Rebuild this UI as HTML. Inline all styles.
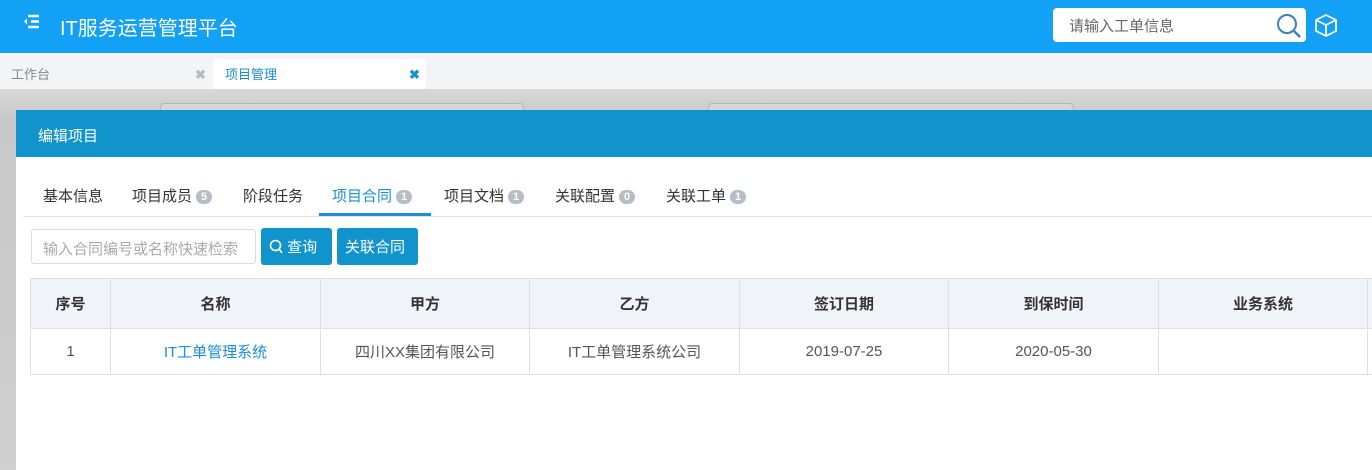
<!DOCTYPE html>
<html><head><meta charset="utf-8"><style>
*{margin:0;padding:0;box-sizing:border-box}
body{width:1372px;height:461px;overflow:hidden;position:relative;font-family:"Liberation Sans","Noto Sans CJK SC",sans-serif;background:#d0d0d0}
.top{position:absolute;left:0;top:0;width:1372px;height:53px;background:#12a1f5}
.title{position:absolute;left:60px;top:12px;color:#fff;font-size:20px}
.search{position:absolute;left:1053px;top:8px;width:253px;height:34px;background:#fff;border-radius:4px}
.search span{position:absolute;left:16px;top:7px;font-size:15px;color:#666}
.tabs{position:absolute;left:0;top:53px;width:1372px;height:36px;background:#f3f4f7}
.tab{position:absolute;top:0;height:36px;font-size:13px;line-height:44px}
.overlay{position:absolute;left:0;top:89px;width:1372px;height:372px;background:linear-gradient(#d8d8d8,#c8c8c8 30px,#cfcfcf)}
.ghost{position:absolute;top:103px;height:20px;border:1px solid #b5b5b5;border-radius:4px;background:#d6d6d6}
.modal{position:absolute;left:16px;top:110px;width:1500px;height:360px;background:#fff}
.mh{height:47px;background:#1193cb;color:#fff;font-size:15px;padding:15px 0 0 22px}
.ntab{position:absolute;top:75px;font-size:15px;color:#333}
.badge{display:inline-block;width:16px;height:14px;border-radius:7px;background:#b5bec6;color:#fff;font-size:11px;text-align:center;line-height:14px;vertical-align:1px;margin-left:4px;font-weight:bold}
table{position:absolute;left:14px;top:168px;border-collapse:collapse;font-size:15px;table-layout:fixed;width:1397px}
td,th{border:1px solid #dde0e4;text-align:center;color:#555;font-weight:normal}
th{height:50px;background:#f0f3f8;color:#333;font-weight:bold}
td{height:46px}
</style></head><body>
<div class="top">
 <svg style="position:absolute;left:22px;top:14px" width="18" height="16"><path d="M6 2h11M9 7.5h8M6 13h11" stroke="#fff" stroke-width="2.5"/><path d="M5 4.5L2 7.5 5 10.5z" fill="#fff"/></svg>
 <div class="title">IT服务运营管理平台</div>
 <div class="search"><span>请输入工单信息</span>
  <svg style="position:absolute;left:222px;top:4px" width="28" height="28"><circle cx="12" cy="12" r="9" fill="none" stroke="#3d7fbf" stroke-width="2"/><path d="M19 19l6 6" stroke="#3d7fbf" stroke-width="2.5"/></svg></div>
 <svg style="position:absolute;left:1314px;top:13px" width="24" height="24"><path d="M12 2l10 5v11l-10 5-10-5V7z M2 7l10 5 10-5 M12 12v11" fill="none" stroke="#fff" stroke-width="1.8" stroke-linejoin="round"/></svg>
</div>
<div class="tabs">
 <div class="tab" style="left:0;width:213px;padding-left:11px;color:#888">工作台<span style="position:absolute;left:195px;color:#bbb;font-weight:bold">✖</span></div>
 <div class="tab" style="left:213px;top:6px;height:30px;line-height:32px;width:213px;background:#fff;border-radius:5px 5px 0 0;padding-left:12px;color:#1a8fd6">项目管理<span style="position:absolute;left:196px;color:#1a8fd6;font-weight:bold">✖</span></div>
</div>
<div class="overlay"></div>
<div class="ghost" style="left:160px;width:364px"></div>
<div class="ghost" style="left:708px;width:366px"></div>
<div class="modal">
 <div class="mh">编辑项目</div>
 <div class="ntab" style="left:27px">基本信息</div>
 <div class="ntab" style="left:116px">项目成员<span class="badge">5</span></div>
 <div class="ntab" style="left:227px">阶段任务</div>
 <div class="ntab" style="left:316px;color:#1a8fd6">项目合同<span class="badge">1</span></div>
 <div style="position:absolute;left:303px;top:103px;width:112px;height:3px;background:#1a8fd6"></div>
 <div class="ntab" style="left:428px">项目文档<span class="badge">1</span></div>
 <div class="ntab" style="left:539px">关联配置<span class="badge">0</span></div>
 <div class="ntab" style="left:650px">关联工单<span class="badge">1</span></div>
 <div style="position:absolute;left:7px;top:106px;width:1493px;height:1px;background:#dde0e4"></div>
 <div style="position:absolute;left:15px;top:119px;width:225px;height:35px;border:1px solid #dcdcdc;border-radius:3px;font-size:15px;color:#aaa;padding:8px 0 0 11px;overflow:hidden;white-space:nowrap">输入合同编号或名称快速检索</div>
 <div style="position:absolute;left:245px;top:118px;width:71px;height:37px;background:#1193cb;border-radius:3px;color:#fff;font-size:15px;padding:8px 0 0 8px">
  <svg width="14" height="15" style="vertical-align:-2px"><circle cx="6.5" cy="6.5" r="5" fill="none" stroke="#fff" stroke-width="1.6"/><path d="M10 10l3 4" stroke="#fff" stroke-width="1.6"/></svg> 查询</div>
 <div style="position:absolute;left:321px;top:118px;width:81px;height:37px;background:#1193cb;border-radius:3px;color:#fff;font-size:15px;padding:8px 0 0 8px">关联合同</div>
 <table>
  <colgroup><col style="width:80px"><col style="width:210px"><col style="width:209px"><col style="width:210px"><col style="width:209px"><col style="width:210px"><col style="width:209px"><col style="width:60px"></colgroup>
  <tr><th>序号</th><th>名称</th><th>甲方</th><th>乙方</th><th>签订日期</th><th>到保时间</th><th>业务系统</th><th></th></tr>
  <tr><td>1</td><td style="color:#1a8fd6">IT工单管理系统</td><td>四川XX集团有限公司</td><td>IT工单管理系统公司</td><td>2019-07-25</td><td>2020-05-30</td><td></td><td></td></tr>
 </table>
</div>
</body></html>
